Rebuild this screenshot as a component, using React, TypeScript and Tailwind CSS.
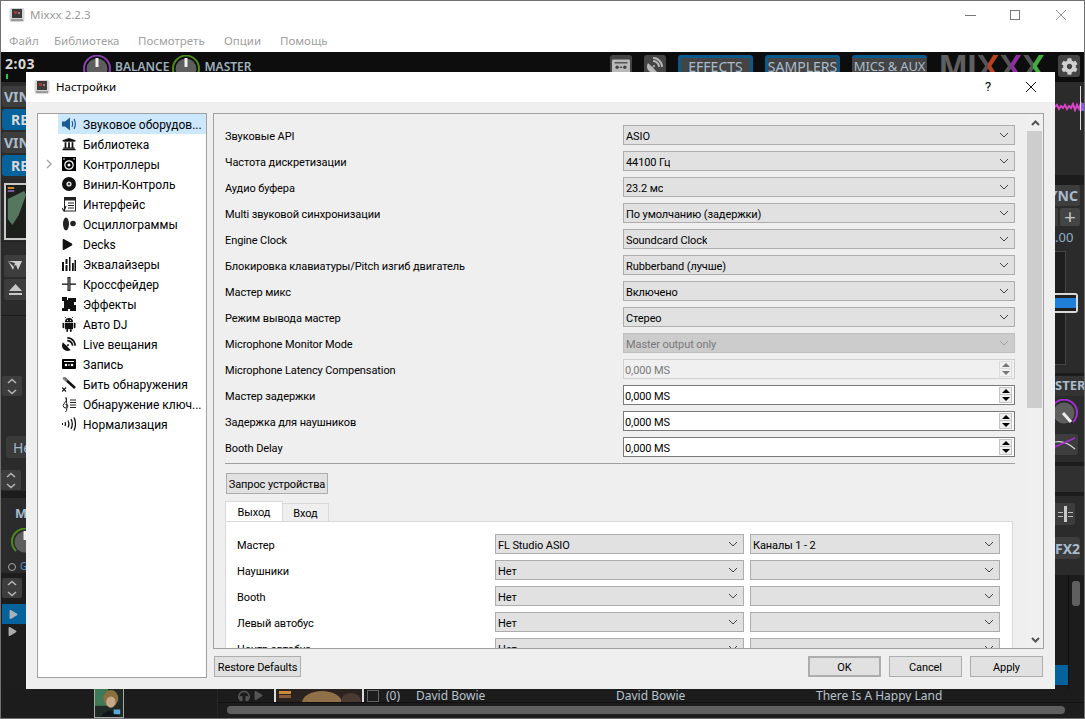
import { FaCog, FaHeadphones, FaPlay, FaSatelliteDish, FaUniversity } from "react-icons/fa";
import type { ReactNode } from "react";

// ! small drawings
const MixxxIcon = () => (
  <svg width="16" height="16" viewBox="0 0 16 16">
    <rect x="0.5" y="1" width="15" height="14" rx="2" fill="#d6d6d6" />
    <rect x="3" y="2" width="10" height="9" fill="#3a3a3a" />
    <rect x="5" y="4" width="3" height="3" fill="#a33" />
    <rect x="9" y="5" width="2" height="2" fill="#888" />
    <rect x="2" y="12" width="12" height="2" fill="#9a9a9a" />
  </svg>
);

const Chevron = ({ color = "#444" }: { color?: string }) => (
  <svg width="10" height="6" viewBox="0 0 10 6" className="shrink-0">
    <polyline points="1,1 5,5 9,1" fill="none" stroke={color} strokeWidth="1" />
  </svg>
);

const UpDown = () => (
  <svg width="10" height="17" viewBox="0 0 10 17">
    <polyline points="1,5 5,1.5 9,5" fill="none" stroke="#b5b5b5" strokeWidth="1.6" />
    <polyline points="1,12 5,15.5 9,12" fill="none" stroke="#b5b5b5" strokeWidth="1.6" />
  </svg>
);

const Knob = ({ color, pointer = "up" }: { color: string; pointer?: string }) => (
  <svg width="28" height="28" viewBox="0 0 28 28">
    <path d="M5 23 A13 13 0 1 1 23 23" fill="none" stroke={color} strokeWidth="2" />
    <circle cx="14" cy="14" r="10.5" fill="#5e5e5e" />
    {pointer === "up" ? (
      <line x1="14" y1="3" x2="14" y2="12" stroke="#eee" strokeWidth="3" />
    ) : (
      <line x1="13" y1="14" x2="21" y2="23" stroke="#eee" strokeWidth="3" />
    )}
  </svg>
);

const AlbumArt = () => (
  <svg width="100%" height="100%" viewBox="0 0 30 30" preserveAspectRatio="none">
    <rect width="30" height="30" fill="#1f2a24" />
    <rect width="14" height="18" fill="#3f7a57" />
    <ellipse cx="17" cy="10" rx="8" ry="9" fill="#8a6f3f" />
    <ellipse cx="17" cy="14" rx="5" ry="6" fill="#c7a98a" />
    <path d="M6 30 Q16 16 26 30 Z" fill="#11161a" />
    <rect x="20" y="22" width="7" height="5" fill="#5aa9d6" />
  </svg>
);

const DeckArt = () => (
  <svg width="100%" height="100%" viewBox="0 0 22 53" preserveAspectRatio="none">
    <rect width="22" height="53" fill="#1d1f1d" />
    <path d="M2 14 L20 6 L22 10 L14 30 L7 40 L2 34 Z" fill="#55775f" />
    <rect x="2" y="2" width="7" height="2" fill="#c98a3a" />
    <rect x="2" y="5" width="7" height="2" fill="#7a5a9a" />
  </svg>
);

const TrackArt = () => (
  <svg width="100%" height="100%" viewBox="0 0 86 14" preserveAspectRatio="none">
    <rect width="86" height="14" fill="#2a2320" />
    <rect x="3" y="2" width="12" height="3" fill="#c98a3a" />
    <rect x="3" y="6" width="12" height="3" fill="#8a5a3a" />
    <ellipse cx="46" cy="14" rx="20" ry="12" fill="#8f7048" />
    <ellipse cx="75" cy="12" rx="10" ry="8" fill="#4a3a34" />
  </svg>
);

const Cassette = ({ fill = "#000", hole = "#fff", size = 14 }: { fill?: string; hole?: string; size?: number }) => (
  <svg width={size} height={size} viewBox="0 0 14 14">
    <rect x="0" y="2" width="14" height="10" rx="1" fill={fill} />
    <rect x="2" y="4" width="10" height="1" fill={hole} />
    <circle cx="4" cy="8" r="1.3" fill={hole} />
    <circle cx="10" cy="8" r="1.3" fill={hole} />
    <rect x="6" y="7.5" width="2" height="1" fill={hole} />
  </svg>
);

const treeIcons: Record<string, ReactNode> = {
  sound: (
    <svg width="15" height="16" viewBox="0 0 15 16">
      <path d="M0 5.5 H3 L8 1.5 V14.5 L3 10.5 H0 Z" fill="#1c5a96" />
      <path d="M10 5 Q11.5 8 10 11" fill="none" stroke="#1c5a96" strokeWidth="1.2" />
      <path d="M12 3 Q14.6 8 12 13" fill="none" stroke="#1c5a96" strokeWidth="1.2" />
    </svg>
  ),
  controllers: (
    <svg width="14" height="14" viewBox="0 0 14 14">
      <rect width="14" height="14" fill="#000" />
      <circle cx="7" cy="8" r="4.2" fill="none" stroke="#fff" strokeWidth="1.2" />
      <circle cx="7" cy="8" r="1.5" fill="#fff" />
      <circle cx="2" cy="2" r="0.8" fill="#fff" />
      <circle cx="12" cy="2" r="0.8" fill="#fff" />
    </svg>
  ),
  vinyl: (
    <svg width="14" height="14" viewBox="0 0 14 14">
      <circle cx="7" cy="7" r="7" fill="#111" />
      <circle cx="7" cy="7" r="2.6" fill="#ddd" />
      <circle cx="7" cy="7" r="1" fill="#111" />
    </svg>
  ),
  iface: (
    <svg width="14" height="15" viewBox="0 0 14 15">
      <rect x="2.5" y="0.5" width="11" height="13.5" fill="none" stroke="#222" />
      <rect x="3" y="1" width="10" height="2.5" fill="#222" />
      <path d="M6 6 H12 M6 8.5 H12 M6 11 H12" stroke="#222" />
      <path d="M0 11 L2 14 L4 9" fill="none" stroke="#222" strokeWidth="1.2" />
    </svg>
  ),
  wave: (
    <svg width="14" height="14" viewBox="0 0 14 14">
      <ellipse cx="4" cy="7" rx="3" ry="6.5" fill="#222" />
      <ellipse cx="11" cy="6.5" rx="2.8" ry="2.8" fill="#222" />
    </svg>
  ),
  eq: (
    <svg width="14" height="14" viewBox="0 0 14 14">
      <path d="M0 5h2v9H0zM3.5 8h2v6h-2zM3.5 2h2v5h-2zM7 0h1.5v14H7zM10 6h1.8v8H10zM12.5 3H14v11h-1.5z" fill="#111" />
    </svg>
  ),
  xfade: (
    <svg width="14" height="14" viewBox="0 0 14 14">
      <rect x="0" y="6.5" width="14" height="1.3" fill="#111" />
      <rect x="5.5" y="0" width="3" height="14" fill="#111" />
      <rect x="6.5" y="1" width="1" height="12" fill="#999" />
    </svg>
  ),
  fx: (
    <svg width="14" height="14" viewBox="0 0 14 14">
      <path d="M0 0h5v3h1V1h8v4h-2v3h2v6H8v-2H6v2H0v-3h2V4H0z" fill="#111" />
    </svg>
  ),
  android: (
    <svg width="14" height="15" viewBox="0 0 14 15">
      <path d="M3 5 A4 4 0 0 1 11 5 Z" fill="#111" />
      <path d="M4 1 L3 0 M10 1 L11 0" stroke="#111" strokeWidth="0.8" />
      <rect x="3" y="5.7" width="8" height="6.5" fill="#111" />
      <rect x="0.5" y="5.7" width="1.8" height="5.5" rx="0.9" fill="#111" />
      <rect x="11.7" y="5.7" width="1.8" height="5.5" rx="0.9" fill="#111" />
      <rect x="4.3" y="12" width="1.8" height="3" rx="0.9" fill="#111" />
      <rect x="7.9" y="12" width="1.8" height="3" rx="0.9" fill="#111" />
      <circle cx="5.5" cy="3.3" r="0.6" fill="#fff" />
      <circle cx="8.5" cy="3.3" r="0.6" fill="#fff" />
    </svg>
  ),
  record: <Cassette />,
  beat: (
    <svg width="14" height="15" viewBox="0 0 14 15">
      <line x1="2" y1="1" x2="13" y2="11" stroke="#111" strokeWidth="2.6" />
      <line x1="1" y1="0.5" x2="5" y2="4" stroke="#888" strokeWidth="2" />
      <path d="M0 10.5 L4 14.5 M4 10.5 L0 14.5" stroke="#111" strokeWidth="1.1" />
    </svg>
  ),
  key: (
    <svg width="14" height="15" viewBox="0 0 14 15">
      <path d="M3.5 15 Q6 14 4 0.5 Q6 3 2.5 6 Q0 8.5 2 10.5 Q4.5 12 6 9.5 Q6 7 3.5 7.5" fill="none" stroke="#222" strokeWidth="1" />
      <path d="M8 3h6M8 5.5h6M8 8h6M8 10.5h6" stroke="#222" strokeWidth="1" />
    </svg>
  ),
  norm: (
    <svg width="14" height="14" viewBox="0 0 14 14">
      <path d="M0 6h1v2H0z" fill="#111" />
      <path d="M3 5 Q4 7 3 9M6 3.5 Q7.8 7 6 10.5M9 2 Q11.6 7 9 12M12 0.5 Q15 7 12 13.5" fill="none" stroke="#111" strokeWidth="1.3" />
    </svg>
  ),
};

const treeItems: { label: string; icon: ReactNode; arrow?: boolean; active?: boolean }[] = [
  { label: "Звуковое оборудов...", icon: treeIcons.sound, active: true },
  { label: "Библиотека", icon: <FaUniversity size={14} color="#111" /> },
  { label: "Контроллеры", icon: treeIcons.controllers, arrow: true },
  { label: "Винил-Контроль", icon: treeIcons.vinyl },
  { label: "Интерфейс", icon: treeIcons.iface },
  { label: "Осциллограммы", icon: treeIcons.wave },
  { label: "Decks", icon: <FaPlay size={11} color="#111" /> },
  { label: "Эквалайзеры", icon: treeIcons.eq },
  { label: "Кроссфейдер", icon: treeIcons.xfade },
  { label: "Эффекты", icon: treeIcons.fx },
  { label: "Авто DJ", icon: treeIcons.android },
  { label: "Live вещания", icon: <FaSatelliteDish size={14} color="#111" /> },
  { label: "Запись", icon: treeIcons.record },
  { label: "Бить обнаружения", icon: treeIcons.beat },
  { label: "Обнаружение ключ...", icon: treeIcons.key },
  { label: "Нормализация", icon: treeIcons.norm },
];

// ! form controls
const Combo = ({ value, disabled, className = "" }: { value?: string; disabled?: boolean; className?: string }) => (
  <div
    className={`flex h-5 items-center justify-between border pl-[2px] pr-[5px] ${
      disabled ? "border-[#bfbfbf] bg-[#cccccc] text-[#787878]" : "border-[#adadad] bg-[#e1e1e1] text-black"
    } ${className}`}
  >
    <span className="truncate pt-[3px] leading-[14px]">{value}</span>
    <Chevron color={disabled ? "#a0a0a0" : "#444"} />
  </div>
);

const Spin = ({ disabled }: { disabled?: boolean }) => (
  <div
    className={`flex h-5 w-full items-center justify-between border pl-[1px] pr-[2px] ${
      disabled ? "border-[#cfcfcf] bg-[#f0f0f0] text-[#787878]" : "border-[#7a7a7a] bg-white text-black"
    }`}
  >
    <span className="pt-[3px] leading-[14px]">0,000 MS</span>
    <div className="flex w-[13px] flex-col">
      {["border-b-[4px]", "border-t-[4px]"].map((dir, i) => (
        <div
          key={dir}
          className={`flex h-2 items-center justify-center border ${i ? "border-t-0" : ""} ${
            disabled ? "border-[#dcdcdc]" : "border-[#c4c4c4] bg-[#efefef]"
          }`}
        >
          <div
            className={`h-0 w-0 border-x-[4px] border-x-transparent ${dir} ${
              disabled ? "border-b-[#777] border-t-[#777]" : "border-b-black border-t-black"
            }`}
          />
        </div>
      ))}
    </div>
  </div>
);

const Btn = ({ children, className = "" }: { children: ReactNode; className?: string }) => (
  <button className={`flex h-[21px] items-center justify-center whitespace-nowrap border border-[#adadad] bg-[#e1e1e1] pt-[3px] leading-[14px] text-black ${className}`}>
    {children}
  </button>
);

const settingRows: { label: string; control: ReactNode }[] = [
  { label: "Звуковые API", control: <Combo value="ASIO" /> },
  { label: "Частота дискретизации", control: <Combo value="44100 Гц" /> },
  { label: "Аудио буфера", control: <Combo value="23.2 мс" /> },
  { label: "Multi звуковой синхронизации", control: <Combo value="По умолчанию (задержки)" /> },
  { label: "Engine Clock", control: <Combo value="Soundcard Clock" /> },
  { label: "Блокировка клавиатуры/Pitch изгиб двигатель", control: <Combo value="Rubberband (лучше)" /> },
  { label: "Мастер микс", control: <Combo value="Включено" /> },
  { label: "Режим вывода мастер", control: <Combo value="Стерео" /> },
  { label: "Microphone Monitor Mode", control: <Combo value="Master output only" disabled /> },
  { label: "Microphone Latency Compensation", control: <Spin disabled /> },
  { label: "Мастер задержки", control: <Spin /> },
  { label: "Задержка для наушников", control: <Spin /> },
  { label: "Booth Delay", control: <Spin /> },
];

const outputRows = [
  { label: "Мастер", device: "FL Studio ASIO", channel: "Каналы 1 - 2" },
  { label: "Наушники", device: "Нет", channel: "" },
  { label: "Booth", device: "Нет", channel: "" },
  { label: "Левый автобус", device: "Нет", channel: "" },
  { label: "Центр автобус", device: "Нет", channel: "" },
];

// ! the preferences dialog, floating over the main window
const SettingsDialog = () => (
  <div className="absolute left-[25px] top-[71px] flex h-[617px] w-[1029px] flex-col bg-[#efefef] font-['Roboto',sans-serif] text-[11px] tracking-[-0.1px] text-black">
    <div className="flex h-[30px] shrink-0 items-center bg-white pl-[8px] pr-[18px]">
      <MixxxIcon />
      <span className="ml-[6px] font-['Noto_Sans',sans-serif] text-[11.5px] tracking-normal">Настройки</span>
      <span className="ml-auto mr-[34px] text-[13px] leading-[14px]">?</span>
      <svg width="12" height="12" viewBox="0 0 12 12">
        <path d="M1 1 L11 11 M11 1 L1 11" stroke="#111" strokeWidth="1" />
      </svg>
    </div>

    <div className="flex gap-[6px] pl-[11px] pt-[11px]">
      <div className="h-[565px] w-[170px] border border-[#a0a0a0] bg-white text-[12px] tracking-normal">
        {treeItems.map((item) => (
          <div key={item.label} className="flex h-5 items-center">
            <div className="flex w-[20px] justify-center pl-[1px]">
              {item.arrow && (
                <svg width="6" height="10" viewBox="0 0 6 10">
                  <polyline points="1,1 5,5 1,9" fill="none" stroke="#a6a6a6" strokeWidth="1.4" />
                </svg>
              )}
            </div>
            <div className={`flex h-5 flex-1 items-center pl-[4px] ${item.active ? "bg-[#cce8ff]" : ""}`}>
              <span className="flex w-[21px] shrink-0 items-center">{item.icon}</span>
              <span className="pt-[2px] leading-[16px]">{item.label}</span>
            </div>
          </div>
        ))}
      </div>

      <div className="flex w-[831px] flex-col gap-[7px]">
        <div className="flex h-[536px] border border-[#a0a0a0]">
          <div className="flex-1 overflow-hidden pl-[11px] pt-[11px]">
            <div className="flex w-[790px] flex-col gap-[6px]">
              {settingRows.map((row) => (
                <div key={row.label} className="flex h-5 items-center">
                  <span className="w-[398px] shrink-0 pt-[3px] leading-[14px]">{row.label}</span>
                  <div className="flex-1">{row.control}</div>
                </div>
              ))}
            </div>
            <div className="mt-[6px] h-px w-[790px] bg-[#a0a0a0]" />
            <Btn className="ml-px mt-[9px] w-[102px]">Запрос устройства</Btn>
            <div className="mt-[7px] flex h-[20px] items-end leading-[14px]">
              <div className="flex h-[20px] w-[58px] items-center justify-center border border-b-0 border-[#d9d9d9] bg-white pt-[3px]">Выход</div>
              <div className="flex h-[18px] w-[46px] items-center justify-center border border-b-0 border-l-0 border-[#d9d9d9] bg-[#efefef] pt-[3px]">Вход</div>
            </div>
            <div className="flex h-[200px] w-[788px] flex-col gap-[6px] border border-[#d9d9d9] bg-white pl-[11px] pt-[12px]">
              {outputRows.map((row) => (
                <div key={row.label} className="flex h-5 shrink-0 items-center">
                  <span className="w-[258px] shrink-0 pt-[3px] leading-[14px]">{row.label}</span>
                  <Combo value={row.device} className="w-[249px]" />
                  <Combo value={row.channel} className="ml-[6px] w-[250px]" />
                </div>
              ))}
            </div>
          </div>
          <div className="flex w-[16px] shrink-0 flex-col bg-[#f0f0f0]">
            <div className="flex h-[17px] items-center justify-center">
              <svg width="9" height="6" viewBox="0 0 9 6">
                <polyline points="1,5 4.5,1.5 8,5" fill="none" stroke="#555" strokeWidth="2" />
              </svg>
            </div>
            <div className="h-[277px] w-[15px] bg-[#cdcdcd]" />
            <div className="mt-auto flex h-[17px] items-center justify-center">
              <svg width="9" height="6" viewBox="0 0 9 6">
                <polyline points="1,1 4.5,4.5 8,1" fill="none" stroke="#555" strokeWidth="2" />
              </svg>
            </div>
          </div>
        </div>

        <div className="flex pl-px pr-px">
          <Btn className="w-[87px]">Restore Defaults</Btn>
          <div className="ml-auto flex gap-[8px]">
            <Btn className="w-[73px] border-2 border-[#0078d7]">OK</Btn>
            <Btn className="w-[73px]">Cancel</Btn>
            <Btn className="w-[73px]">Apply</Btn>
          </div>
        </div>
      </div>
    </div>
  </div>
);

// ! main window behind the dialog
const Toolbar = () => (
  <div className="flex h-[30px] shrink-0 items-start overflow-hidden bg-[#0d0d0d]">
    <div className="ml-[4px] w-[78px] pt-[4px]">
      <div className="text-[14px] font-bold leading-[16px] tracking-[0.5px] text-[#d8d8d8]">2:03</div>
      <div className="ml-px mt-[2px] h-[5px] w-[2px] bg-[#22cc44]" />
    </div>
    <div className="mt-[3px]"><Knob color="#8a3fb0" /></div>
    <span className="ml-[4px] mt-[6px] text-[12px] font-semibold text-[#9fb0bc]">BALANCE</span>
    <div className="ml-[3px] mt-[3px]"><Knob color="#4c8a1e" /></div>
    <span className="ml-[4px] mt-[6px] text-[12px] font-semibold text-[#9fb0bc]">MASTER</span>

    <div className="ml-auto mr-[4px] flex items-start gap-[12px] pt-[3px]">
      <div className="flex h-[24px] w-[22px] justify-center rounded-[3px] bg-[#444] pt-[2px]"><Cassette fill="#b9b9b9" hole="#444" size={18} /></div>
      <div className="flex h-[24px] w-[22px] justify-center rounded-[3px] bg-[#444] pt-[2px]"><FaSatelliteDish size={16} color="#b9b9b9" /></div>
      {["EFFECTS", "SAMPLERS"].map((name) => (
        <div key={name} className="flex h-[24px] w-[75px] justify-center overflow-hidden whitespace-nowrap rounded-[3px] border-[3px] border-[#075a8c] bg-[#444] text-[14px] leading-[17px] text-[#a9bccb]">
          {name}
        </div>
      ))}
      <div className="flex h-[24px] w-[75px] justify-center whitespace-nowrap rounded-[3px] border-y-[3px] border-[#075a8c] bg-[#444] text-[13px] leading-[17px] tracking-[-0.2px] text-[#a9bccb]">
        MICS &amp; AUX
      </div>
      <div className="-mt-[6px] w-[106px] whitespace-nowrap font-['Liberation_Sans',sans-serif] text-[34px] font-bold leading-[34px] text-[#5f5f5f]">
        <span>MI</span>
        <span className="bg-[linear-gradient(90deg,#555_50%,#b8431f_50%)] bg-clip-text text-transparent">X</span>
        <span className="bg-[linear-gradient(90deg,#555_50%,#8a2f9c_50%)] bg-clip-text text-transparent">X</span>
        <span className="bg-[linear-gradient(90deg,#555_50%,#3fae3f_50%)] bg-clip-text text-transparent">X</span>
      </div>
      <div className="ml-px flex h-[22px] w-[22px] items-center justify-center rounded-[3px] bg-[#444]"><FaCog size={17} color="#d0d0d0" /></div>
    </div>
  </div>
);

const DeckBtn = ({ text, blue }: { text: string; blue?: boolean }) => (
  <div className={`ml-px flex h-[21px] items-center overflow-hidden whitespace-nowrap rounded-l-[3px] text-[14px] font-bold ${blue ? "bg-[#05629a] pl-[9px] text-[#d8d8d8]" : "bg-[#3d3d3d] pl-[2px] text-[#a9bccb]"}`}>
    {text}
  </div>
);

const ArrowBtn = ({ className = "" }: { className?: string }) => (
  <div className={`flex h-[20px] w-[20px] items-center justify-center rounded-[2px] bg-[#3d3d3d] ${className}`}>
    <UpDown />
  </div>
);

const LeftStrip = () => (
  <div className="w-[25px] shrink-0 overflow-hidden bg-[#2b2b2b] pt-[4px]">
    <DeckBtn text="VIN" />
    <div className="mt-[2px]"><DeckBtn text="RE" blue /></div>
    <div className="mt-[2px]"><DeckBtn text="VIN" /></div>
    <div className="mt-[2px]"><DeckBtn text="RE" blue /></div>
    <div className="ml-[3px] mt-[7px] h-[57px] overflow-hidden border-2 border-r-0 border-[#c8c8c8]"><DeckArt /></div>
    <div className="mt-px h-px bg-[#222]" />
    <div className="ml-[3px] mt-[13px] flex h-[22px] items-center justify-center rounded-l-[2px] bg-[#3d3d3d]">
      <svg width="14" height="10" viewBox="0 0 14 10"><path d="M0 0h14l-4 9-2-5-2 1 1-3zM0 0l5 9 1-3z" fill="#d0d0d0" /></svg>
    </div>
    <div className="ml-[3px] mt-[2px] flex h-[21px] items-center justify-center rounded-l-[2px] bg-[#3d3d3d]">
      <svg width="13" height="12" viewBox="0 0 13 12"><path d="M6.5 0L13 7H0z M0 9h13v2H0z" fill="#c8c8c8" /></svg>
    </div>
    <div className="mt-[15px] h-px bg-[#1c1c1c]" />
    <ArrowBtn className="ml-px mt-[60px]" />
    <div className="ml-[5px] mt-[40px] flex h-[22px] items-center overflow-hidden rounded-l-[3px] bg-[#3a3a3a] pl-[7px] text-[14px] text-[#9fb9c9]">He</div>
    <ArrowBtn className="mt-[12px]" />
    <div className="mt-px h-[7px] bg-[#1c1c1c]" />
    <div className="ml-[14px] mt-[9px] text-[13px] font-bold leading-[12px] text-[#a9bccb]">M</div>
    <div className="ml-[10px] mt-[9px] h-[30px] overflow-hidden"><Knob color="#4c8a1e" /></div>
    <div className="ml-[7px] mt-[4px] flex h-[9px] items-center gap-[4px]">
      <div className="h-[8px] w-[8px] shrink-0 rounded-full border border-[#aaa]" />
      <span className="text-[10px] text-[#5a95c0]">G</span>
    </div>
    <div className="mt-[2px] h-px bg-[#1c1c1c]" />
    <div className="bg-[#1d1d1d] pt-[4px]">
      <ArrowBtn className="ml-px" />
      <div className="ml-px mt-[6px] flex h-[20px] items-center bg-[#05629a] pl-[7px]"><FaPlay size={9} color="#aab2b8" /></div>
      <div className="flex h-[70px] items-start bg-[#1d1d1d] pl-[7px] pt-[3px]"><FaPlay size={9} color="#aaa" /></div>
    </div>
  </div>
);

const RightStrip = () => (
  <div className="w-[29px] shrink-0 overflow-hidden bg-[#2b2b2b]">
    <div className="relative h-[93px] pt-[20px]">
      <div className="absolute right-[3px] top-[4px] h-[44px] w-px bg-[#dddddd]" />
      <svg width="29" height="10" viewBox="0 0 29 10">
        <path d="M0 5 L2 3 L4 7 L6 4 L8 6 L10 3 L12 7 L14 4 L16 6 L18 2 L20 8 L22 3 L24 7 L26 1 L28 9" fill="none" stroke="#d844c8" strokeWidth="2" />
        <rect x="26" y="1" width="3" height="8" fill="#8a5ce0" />
      </svg>
    </div>
    <div className="h-[10px] bg-[#1c1c1c]" />
    <div className="flex h-[21px] w-[25px] items-center justify-end overflow-hidden whitespace-nowrap rounded-r-[2px] bg-[#3d3d3d] pr-[2px] text-[14px] font-bold text-[#a9bccb]">YNC</div>
    <div className="mt-[2px] flex gap-[2px]">
      <div className="h-[18px] w-[3px] bg-[#3d3d3d]" />
      <div className="flex h-[18px] w-[20px] items-center justify-center rounded-[2px] bg-[#444] text-[20px] leading-none text-[#c8c8c8]">+</div>
    </div>
    <div className="mt-[3px] h-[16px] text-[13px] leading-[16px] text-[#8fb0c6]">.00</div>
    <div className="relative mt-[6px] h-[114px] w-[11px] border border-l-0 border-[#454545] bg-[#1e1e1e]">
      <div className="absolute left-0 top-[41px] h-[20px] w-[23px] rounded-r-[3px] border-2 border-l-0 border-[#d8d8d8] bg-[#1e1e1e] py-[3px]">
        <div className="h-full bg-[#1f7fd8]" />
      </div>
    </div>
    <div className="mt-[8px] h-[3px] bg-[#1c1c1c]" />
    <div className="flex h-[20px] items-center overflow-hidden whitespace-nowrap bg-[#333] text-[13px] font-bold text-[#a9bccb]">STER</div>
    <div className="mt-[3px] h-[32px] w-[23px] overflow-hidden">
      <div className="-ml-[5px]"><Knob color="#a030d0" pointer="down" /></div>
    </div>
    <div className="mt-[3px] h-[21px] w-[23px] rounded-r-[3px] bg-[#3d3d3d]">
      <svg width="23" height="21" viewBox="0 0 23 21">
        <path d="M0 8 Q10 6 20 15" fill="none" stroke="#d8d8d8" strokeWidth="1.2" />
        <path d="M0 13 L20 4" fill="none" stroke="#a030d0" strokeWidth="1.6" />
      </svg>
    </div>
    <div className="mt-[7px] h-[4px] bg-[#1c1c1c]" />
    <div className="h-[26px] bg-[#303030]" />
    <div className="h-[4px] bg-[#1c1c1c]" />
    <div className="mt-[7px] flex h-[22px] w-[20px] items-center justify-center gap-px rounded-r-[3px] bg-[#3d3d3d]">
      <div className="h-[5px] w-[5px] border-y border-[#bbb]" />
      <div className="h-[16px] w-[3px] bg-[#c8c8c8]" />
      <div className="h-[5px] w-[5px] border-y border-[#bbb]" />
    </div>
    <div className="mt-[12px] flex h-[22px] w-[25px] items-center overflow-hidden rounded-r-[3px] bg-[#3d3d3d] text-[14px] font-bold text-[#a9bccb]">FX2</div>
    <div className="mt-[16px] flex h-[114px] bg-[#1c1c1c]">
      <div className="w-[14px] border-r border-[#111]">
        <div className="mt-[90px] h-[20px] bg-[#05629a]" />
      </div>
      <div className="flex-1 pl-[3px] pt-[6px]">
        <div className="h-[25px] w-[8px] rounded-[3px] bg-[#5f5f5f]" />
      </div>
    </div>
  </div>
);

const BottomBar = () => (
  <div className="flex h-[29px] shrink-0 bg-[#1c1c1c] text-[12px] text-[#b8c4cc]">
    <div className="ml-[93px] h-[29px] w-[30px] border border-t-0 border-[#a8a8a8]"><AlbumArt /></div>
    <div className="ml-[93px] flex flex-1 flex-col border-l border-[#252525]">
      <div className="flex h-[14px] items-center overflow-hidden whitespace-nowrap border-b border-[#111]">
        <FaHeadphones size={12} color="#555" className="ml-[20px]" />
        <FaPlay size={9} color="#555" className="ml-[4px]" />
        <div className="ml-[11px] h-[14px] w-[90px] overflow-hidden border-x-2 border-[#ddd]"><TrackArt /></div>
        <div className="ml-[3px] h-[12px] w-[12px] border border-[#666]" />
        <span className="ml-[7px] w-[30px]">(0)</span>
        <span className="w-[200px]">David Bowie</span>
        <span className="w-[200px]">David Bowie</span>
        <span>There Is A Happy Land</span>
      </div>
      <div className="ml-[9px] mr-[19px] mt-[3px] h-[8px] rounded-[4px] bg-[#5f5f5f]" />
    </div>
  </div>
);

export default function App() {
  return (
    <div className="relative flex h-[719px] w-[1085px] flex-col overflow-hidden border border-[#707070] bg-[#1c1c1c] font-['Noto_Sans',sans-serif] text-[11.5px]">
      <div className="flex h-[28px] shrink-0 items-center bg-white pl-[8px] pr-[18px] text-[#9a9a9a]">
        <MixxxIcon />
        <span className="ml-[5px]">Mixxx 2.2.3</span>
        <svg width="11" height="11" viewBox="0 0 11 11" className="ml-auto"><path d="M0 5.5H11" stroke="#777" /></svg>
        <svg width="10" height="10" viewBox="0 0 10 10" className="ml-[34px]"><rect x="0.5" y="0.5" width="9" height="9" fill="none" stroke="#777" /></svg>
        <svg width="10" height="10" viewBox="0 0 10 10" className="ml-[36px]"><path d="M0 0L10 10M10 0L0 10" stroke="#999" /></svg>
      </div>
      <div className="flex h-[23px] shrink-0 items-center bg-white pl-[8px] text-[#a0a0a0]">
        <span className="w-[45px]">Файл</span>
        <span className="w-[84px]">Библиотека</span>
        <span className="w-[86px]">Посмотреть</span>
        <span className="w-[56px]">Опции</span>
        <span>Помощь</span>
      </div>
      <Toolbar />
      <div className="flex flex-1 overflow-hidden">
        <LeftStrip />
        <div className="flex-1 bg-[#1c1c1c]" />
        <RightStrip />
      </div>
      <BottomBar />
      <SettingsDialog />
    </div>
  );
}
